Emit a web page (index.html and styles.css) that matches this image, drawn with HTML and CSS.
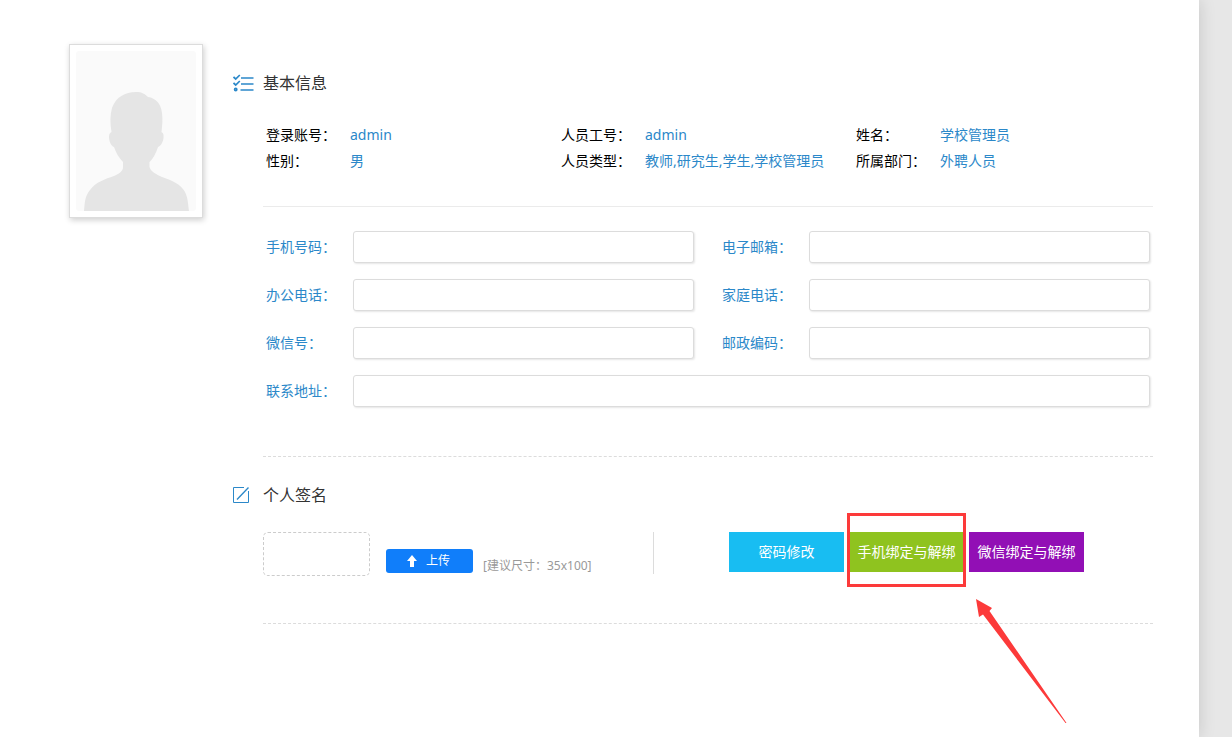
FILE: index.html
```
<!DOCTYPE html>
<html lang="zh-CN">
<head>
<meta charset="utf-8">
<title>个人信息</title>
<link rel="stylesheet" href="styles.css">
</head>
<body>
<main class="panel">
  <div class="photo">
    <svg class="photo-image" viewBox="0 0 120 160" role="img" aria-label="头像">
      <rect width="120" height="160" rx="3" fill="#fafafa"/>
      <path fill="#e5e5e5" d="M8 160C9 150 9 145 14 139C20 131 29 128 38 125C44 122 47 120 47 116V111C43 107 40 102 38 96C35 95 33 90 33 86C33 83 34 82 35.500 81C34 72 34 64 36 57C40 46 49 41 60 41C66 41 69 43 72 46C80 47 85 53 86 62C87 69 86 76 85.500 81C87 82 88 83 87.500 87C87 91 85 95 82 96C80 102 77 108 73.500 111V116C75 121 80 123 86 126C95 129 105 133 109 141C112 147 112 153 113 160Z"/>
    </svg>
  </div>
  <div class="content">
    <section class="basic">
      <h2 class="heading">
        <svg class="heading-icon" viewBox="0 0 21 18" fill="none" stroke="#2b88c9" stroke-width="1.700" aria-hidden="true">
          <path d="M8 4H20.500M8 10H20.500M7.500 16H20.500"/>
          <path d="M0.500 3L2.700 5L6.800 1M0.500 9L2.700 11L6.800 7"/>
          <circle cx="2.700" cy="15.500" r="1.100"/>
        </svg>
        基本信息
      </h2>
      <dl class="info">
        <div class="info-item"><dt>登录账号：</dt><dd>admin</dd></div>
        <div class="info-item"><dt>人员工号：</dt><dd>admin</dd></div>
        <div class="info-item"><dt>姓名：</dt><dd>学校管理员</dd></div>
        <div class="info-item"><dt>性别：</dt><dd>男</dd></div>
        <div class="info-item"><dt>人员类型：</dt><dd>教师,研究生,学生,学校管理员</dd></div>
        <div class="info-item"><dt>所属部门：</dt><dd>外聘人员</dd></div>
      </dl>
      <form class="contact">
        <div class="field"><label for="mobile">手机号码：</label><input id="mobile" type="text"></div>
        <div class="field"><label for="email">电子邮箱：</label><input id="email" type="text"></div>
        <div class="field"><label for="office">办公电话：</label><input id="office" type="text"></div>
        <div class="field"><label for="home">家庭电话：</label><input id="home" type="text"></div>
        <div class="field"><label for="wechat">微信号：</label><input id="wechat" type="text"></div>
        <div class="field"><label for="zip">邮政编码：</label><input id="zip" type="text"></div>
        <div class="field field-wide"><label for="address">联系地址：</label><input id="address" type="text"></div>
      </form>
    </section>
    <section class="signature">
      <h2 class="heading">
        <svg class="heading-icon" viewBox="0 0 21 18" fill="none" stroke="#2b88c9" aria-hidden="true">
          <path d="M11 1.500H0.500V16.500H15.500V5"/>
          <path stroke-width="1.300" d="M4 13.500L15.500 1.500"/>
        </svg>
        个人签名
      </h2>
      <div class="signature-row">
        <div class="upload">
          <div class="preview"></div>
          <button class="upload-button" type="button">
            <svg class="upload-icon" viewBox="0 0 10 12" aria-hidden="true"><path fill="#fff" d="M5 0L10 6H7V12H3V6H0Z"/></svg>
            上传
          </button>
          <span class="hint">[建议尺寸：35x100]</span>
        </div>
        <div class="actions">
          <button class="action action-password" type="button">密码修改</button>
          <div class="marked">
            <button class="action action-mobile" type="button">手机绑定与解绑</button>
            <svg class="arrow" viewBox="0 0 92 126" aria-hidden="true"><path fill="#fc3a3a" d="M0 0L16 9L13.500 12L90.500 124L89.500 124L7 15.500L3 18Z"/></svg>
          </div>
          <button class="action action-wechat" type="button">微信绑定与解绑</button>
        </div>
      </div>
    </section>
  </div>
</main>
</body>
</html>
```
FILE: styles.css
```
* {
  box-sizing: border-box;
}

body {
  margin: 0;
  background: #e7e7e7;
  color: #000;
  font: 14px/26px "Noto Sans", "Noto Sans CJK SC", sans-serif;
}

button,
input {
  font: inherit;
}

.panel {
  display: flex;
  align-items: flex-start;
  gap: 30px;
  min-height: 100vh;
  margin-right: 33px;
  padding: 44px 46px 44px 69px;
  background: #fff;
  box-shadow: 0 0 16px rgba(0, 0, 0, 0.15);
}

.photo {
  flex: none;
  padding: 6px;
  border: 1px solid #dcdcdc;
  background: #fff;
  box-shadow: 1px 2px 6px rgba(0, 0, 0, 0.2);
}

.photo-image {
  display: block;
  width: 120px;
  height: 160px;
}

.content {
  flex: 1;
  min-width: 0;
}

.basic {
  padding-top: 26px;
}

.heading {
  display: flex;
  align-items: center;
  gap: 9px;
  margin: 0;
  color: #333;
  font-size: 16px;
  font-weight: 400;
  line-height: 26px;
}

.heading-icon {
  width: 21px;
  height: 18px;
}

.info {
  display: grid;
  grid-template-columns: repeat(3, 1fr);
  margin: 26px 0 0 30px;
  padding: 0 2px 32px 3px;
  border-bottom: 1px solid #ebebeb;
}

.info-item {
  display: flex;
}

.info dt {
  flex: none;
  width: 84px;
}

.info dd {
  margin: 0;
  color: #2b88c9;
  white-space: nowrap;
}

.contact {
  display: grid;
  grid-template-columns: 1fr 1fr;
  gap: 16px 28px;
  margin-left: 30px;
  padding: 24px 3px 49px;
  border-bottom: 1px dashed #dcdcdc;
}

.field {
  display: flex;
  align-items: center;
}

.field-wide {
  grid-column: 1 / -1;
}

.field label {
  flex: none;
  width: 87px;
  color: #2b88c9;
}

.field input {
  flex: 1;
  min-width: 0;
  height: 32px;
  padding: 0 8px;
  border: 1px solid #dcdcdc;
  border-radius: 3px;
  background: #fff;
  box-shadow: 1px 1px 2px rgba(0, 0, 0, 0.1);
}

.signature {
  padding-top: 25px;
}

.signature-row {
  display: flex;
  align-items: flex-start;
  margin: 24px 0 0 30px;
  padding-bottom: 49px;
  border-bottom: 1px dashed #dcdcdc;
}

.upload {
  display: flex;
  align-items: flex-end;
  width: 391px;
  border-right: 1px solid #dcdcdc;
  height: 42px;
}

.preview {
  width: 107px;
  height: 44px;
  margin: 0 16px -2px 0;
  border: 1px dashed #ccc;
  border-radius: 5px;
}

.upload-button {
  display: flex;
  align-items: center;
  justify-content: center;
  gap: 9px;
  width: 87px;
  height: 24px;
  margin: 0 10px 1px 0;
  padding: 0 2px 1px 0;
  border: 0;
  border-radius: 3px;
  background: #107efa;
  color: #fff;
  font-size: 12px;
  line-height: 23px;
}

.upload-icon {
  width: 10px;
  height: 12px;
}

.hint {
  color: #999;
  font-size: 12px;
  line-height: 16px;
}

.actions {
  display: flex;
  gap: 5px;
  margin-left: 75px;
}

.action {
  display: block;
  width: 115px;
  height: 40px;
  padding: 0;
  border: 0;
  color: #fff;
  font-size: 14px;
}

.action-password {
  background: #18bdf2;
}

.action-mobile {
  background: #8fc31f;
}

.action-wechat {
  background: #920fb5;
}

.marked {
  position: relative;
}

.marked::after {
  content: "";
  position: absolute;
  inset: -19px -2px -15px;
  border: 3px solid #fc3a3a;
  pointer-events: none;
}

.arrow {
  position: absolute;
  top: 67px;
  left: 127px;
  width: 92px;
  height: 126px;
  pointer-events: none;
}
```
